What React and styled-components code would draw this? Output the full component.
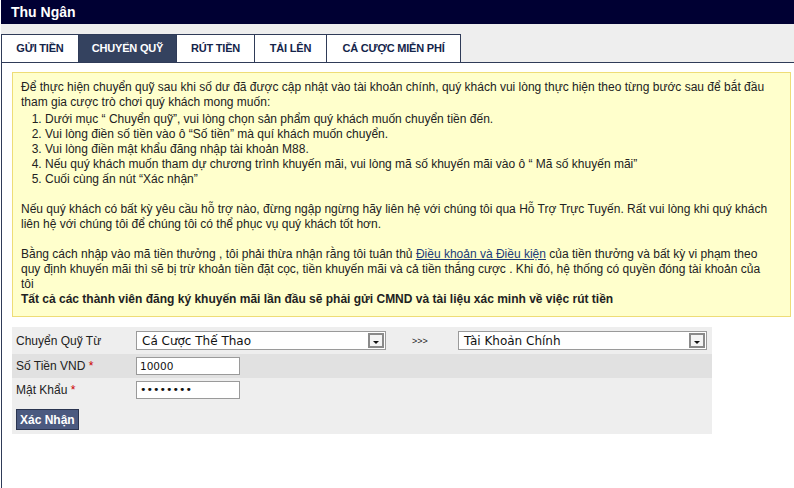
import React from 'react';
import styled, { createGlobalStyle } from 'styled-components';

const GlobalStyle = createGlobalStyle`
  html, body {
    margin: 0;
    padding: 0;
    background: #fff;
  }
  body {
    font-family: "Liberation Sans", Arial, sans-serif;
    font-size: 12px;
    color: #222;
  }
`;

const Page = styled.div`
  margin-left: 1px;
  height: 488px;
  display: flex;
  flex-direction: column;
`;

const TitleBar = styled.div`
  height: 24px;
  background: #000033;
  color: #fff;
  font-weight: bold;
  font-size: 14px;
  line-height: 24px;
  padding-left: 10px;
`;

const TabBar = styled.div`
  background: #eeeeee;
  padding-top: 10px;
  display: flex;
  border-bottom: 1px solid #2f3b58;
`;

const Tab = styled.div`
  width: ${(p) => p.$w}px;
  height: 27px;
  line-height: 27px;
  text-align: center;
  font-size: 11px;
  letter-spacing: -0.2px;
  font-weight: bold;
  text-transform: uppercase;
  border: 1px solid #2f3b58;
  border-bottom: none;
  border-left: ${(p) => (p.$first ? '1px solid #2f3b58' : 'none')};
  background: ${(p) => (p.$active ? '#34425f' : '#fff')};
  color: ${(p) => (p.$active ? '#fff' : '#14244a')};
`;

const Content = styled.div`
  flex: 1;
  border-left: 1px solid #2f3b58;
  padding: 9px 3px 0 10px;
`;

const Notice = styled.div`
  background: #ffffcc;
  border: 1px solid #eedd77;
  padding: 7px 8px 9px 8px;
  line-height: 15px;
  color: #222;

  p {
    margin: 0;
  }
  p + p, ol + p {
    margin-top: 15px;
  }
`;

const Steps = styled.ol`
  margin: 2px 0 0 0;
  padding-left: 24px;
`;

const TermsLink = styled.a`
  color: #1c3c78;
  text-decoration: underline;
`;

const Strong = styled.div`
  font-weight: bold;
`;

const Form = styled.div`
  width: 700px;
  margin-top: 10px;
  background: #eeeeee;
`;

const Row = styled.div`
  display: flex;
  align-items: ${(p) => (p.$top ? 'flex-start' : 'center')};
  height: ${(p) => p.$h || 24}px;
  background: ${(p) => (p.$shade ? '#e1e1e1' : 'transparent')};
  padding-left: 4px;
`;

const Label = styled.div`
  width: 120px;
  color: #222;
`;

const Req = styled.span`
  color: #cc0000;
`;

const Select = styled.div`
  width: ${(p) => p.$w}px;
  height: 19px;
  box-sizing: border-box;
  border: 1px solid #9a9a9a;
  background: #fff;
  display: flex;
  align-items: center;
  justify-content: space-between;
  padding-left: 5px;
  padding-right: 1px;
  font-family: "DejaVu Sans", Verdana, sans-serif;
  font-size: 12px;
  color: #111;
`;

const Arrow = styled.div`
  width: 16px;
  height: 15px;
  box-sizing: border-box;
  border: 2px solid #8a8a8a;
  background: #f4f4f4;
  display: flex;
  align-items: center;
  justify-content: center;

  &::after {
    content: '';
    border-left: 3px solid transparent;
    border-right: 3px solid transparent;
    border-top: 3px solid #111;
    margin-top: 3px;
  }
`;

const Arrows = styled.div`
  width: 46px;
  padding-left: 26px;
  font-size: 9px;
  color: #222;
`;

const Input = styled.div`
  width: 104px;
  height: 18px;
  box-sizing: border-box;
  border: 1px solid #9a9a9a;
  background: #fff;
  padding-left: 3px;
  line-height: 16px;
  font-family: "DejaVu Sans", Verdana, sans-serif;
  font-size: ${(p) => (p.$secret ? '11px' : '10.5px')};
  color: #111;
`;

const Button = styled.button`
  margin-top: 7px;
  height: 21px;
  padding: 0 3px;
  background: #4b5a80;
  border: 1px solid #2a3450;
  color: #fff;
  font-family: "Liberation Sans", Arial, sans-serif;
  font-weight: bold;
  font-size: 12px;
`;

const tabs = [
  ['Gửi Tiền', 76],
  ['Chuyển Quỹ', 97],
  ['Rút Tiền', 77],
  ['Tải Lên', 71],
  ['Cá Cược Miễn Phí', 133],
];

export default function App() {
  return (
    <>
      <GlobalStyle />
      <Page>
        <TitleBar>Thu Ngân</TitleBar>
        <TabBar>
          {tabs.map(([t, w], i) => (
            <Tab key={t} $w={w} $first={i === 0} $active={i === 1}>{t}</Tab>
          ))}
        </TabBar>
        <Content>
          <Notice>
            <p>
              Để thực hiện chuyển quỹ sau khi số dư đã được cập nhật vào tài khoản chính, quý khách vui lòng thực hiện theo từng bước sau để bắt đầu tham gia cược trò chơi quý khách mong muốn:
            </p>
            <Steps>
              <li>Dưới mục “ Chuyển quỹ”, vui lòng chọn sản phẩm quý khách muốn chuyển tiền đến.</li>
              <li>Vui lòng điền số tiền vào ô “Số tiền” mà quí khách muốn chuyển.</li>
              <li>Vui lòng điền mật khẩu đăng nhập tài khoản M88.</li>
              <li>Nếu quý khách muốn tham dự chương trình khuyến mãi, vui lòng mã số khuyến mãi vào ô “ Mã số khuyến mãi”</li>
              <li>Cuối cùng ấn nút “Xác nhận”</li>
            </Steps>
            <p>
              Nếu quý khách có bất kỳ yêu cầu hỗ trợ nào, đừng ngập ngừng hãy liên hệ với chúng tôi qua Hỗ Trợ Trực Tuyến. Rất vui lòng khi quý khách liên hệ với chúng tôi để chúng tôi có thể phục vụ quý khách tốt hơn.
            </p>
            <p>
              Bằng cách nhập vào mã tiền thưởng , tôi phải thừa nhận rằng tôi tuân thủ <TermsLink href="#">Điều khoản và Điều kiện</TermsLink> của tiền thưởng và bất kỳ vi phạm theo<br />
              quy định khuyến mãi thì sẽ bị trừ khoản tiền đặt cọc, tiền khuyến mãi và cả tiền thắng cược . Khi đó, hệ thống có quyền đóng tài khoản của<br />
              tôi
            </p>
            <Strong>Tất cả các thành viên đăng ký khuyến mãi lần đầu sẽ phải gửi CMND và tài liệu xác minh về việc rút tiền</Strong>
          </Notice>
          <Form>
            <Row $h={27}>
              <Label>Chuyển Quỹ Từ</Label>
              <Select $w={250}>
                Cá Cược Thế Thao
                <Arrow />
              </Select>
              <Arrows>&gt;&gt;&gt;</Arrows>
              <Select $w={249}>
                Tài Khoản Chính
                <Arrow />
              </Select>
            </Row>
            <Row $shade>
              <Label>Số Tiền VND <Req>*</Req></Label>
              <Input>10000</Input>
            </Row>
            <Row>
              <Label>Mật Khẩu <Req>*</Req></Label>
              <Input $secret>••••••••</Input>
            </Row>
            <Row $h={32} $top>
              <Button>Xác Nhận</Button>
            </Row>
          </Form>
        </Content>
      </Page>
    </>
  );
}
